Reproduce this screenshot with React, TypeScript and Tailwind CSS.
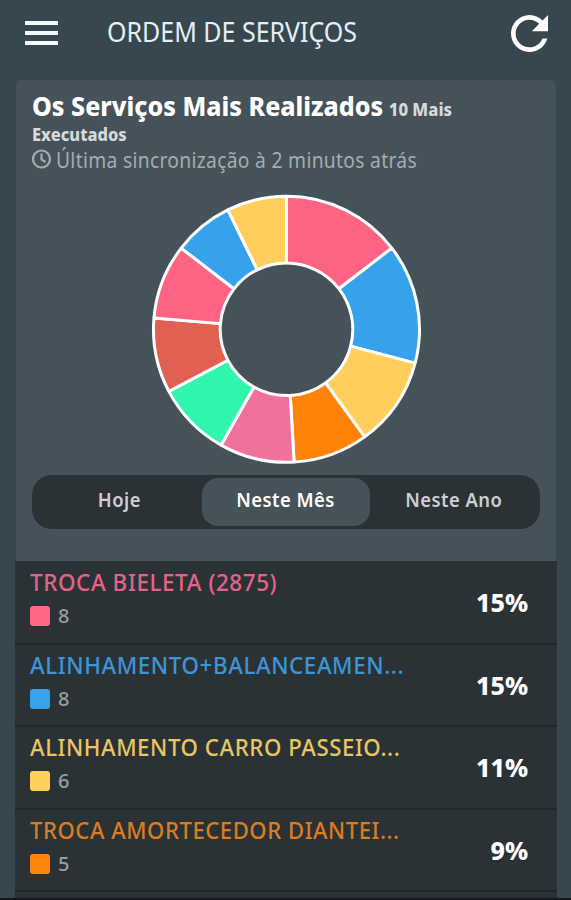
const services = [
  { name: "TROCA BIELETA (2875)", count: 8, percent: "15%", text: "text-[#e46487]", box: "bg-[#ff6684]", scale: "scale-x-[0.936]" },
  { name: "ALINHAMENTO+BALANCEAMEN...", count: 8, percent: "15%", text: "text-[#3e94d5]", box: "bg-[#38a2eb]", scale: "scale-x-[0.933]" },
  { name: "ALINHAMENTO CARRO PASSEIO...", count: 6, percent: "11%", text: "text-[#e8c663]", box: "bg-[#ffce5d]", scale: "scale-x-[0.927]" },
  { name: "TROCA AMORTECEDOR DIANTEI...", count: 5, percent: "9%", text: "text-[#db7c22]", box: "bg-[#ff850e]", scale: "scale-x-[0.92]" },
];

const slices = [
  { value: 8, color: "#ff6384" },
  { value: 8, color: "#36a2eb" },
  { value: 6, color: "#ffce5c" },
  { value: 5, color: "#ff8308" },
  { value: 5, color: "#f0729c" },
  { value: 5, color: "#2ff5ad" },
  { value: 5, color: "#e06052" },
  { value: 5, color: "#ff6384" },
  { value: 4, color: "#36a2eb" },
  { value: 4, color: "#ffce5c" },
];

const periods = [
  { label: "Hoje", active: false, shift: "pl-[6px]" },
  { label: "Neste Mês", active: true, shift: "" },
  { label: "Neste Ano", active: false, shift: "pr-[5px]" },
];

const total = slices.reduce((sum, slice) => sum + slice.value, 0);

const point = (value: number, radius: number) => {
  const angle = (value / total) * Math.PI * 2;
  return `${(Math.sin(angle) * radius).toFixed(2)} ${(-Math.cos(angle) * radius).toFixed(2)}`;
};

function DonutChart() {
  let start = 0;

  return (
    <svg viewBox="-136.5 -136.3 272 272" className="h-[272px] w-[272px]">
      {slices.map((slice, index) => {
        const end = start + slice.value;
        const d = `M${point(start, 133)}A133 133 0 0 1 ${point(end, 133)}L${point(end, 66.3)}A66.3 66.3 0 0 0 ${point(start, 66.3)}Z`;
        start = end;
        return (
          <path key={index} d={d} fill={slice.color} stroke="#fff" strokeWidth="3" strokeLinejoin="bevel" />
        );
      })}
    </svg>
  );
}

export default function App() {
  return (
    <main className="flex h-[900px] w-[571px] flex-col overflow-hidden border-b-2 border-[#171820] bg-[#37474f] font-['Noto_Sans','Open_Sans',sans-serif]">
      <header className="flex h-20 shrink-0 items-start justify-between pr-[23px] pl-[25px]">
        <div className="flex items-start">
          <button type="button" aria-label="Menu" className="mt-[21px] flex w-[33px] flex-col gap-[6px]">
            <span className="h-1 bg-[#f4f9fb]" />
            <span className="h-1 bg-[#f4f9fb]" />
            <span className="h-1 bg-[#f4f9fb]" />
          </button>
          <h1 className="mt-[14px] ml-[49px] origin-left scale-x-[0.925] text-[27px] leading-9 font-normal whitespace-nowrap text-[#e6eff2]">
            ORDEM DE SERVIÇOS
          </h1>
        </div>
        <button type="button" aria-label="Atualizar" className="mt-[15px]">
          <svg viewBox="80 80 352 352" className="h-[37px] w-[37px]" fill="#fff">
            <path d="M256 388c-72.597 0-132-59.405-132-132 0-72.601 59.403-132 132-132 36.3 0 69.299 15.4 92.406 39.601L278 234h154V80l-51.698 51.702C348.406 99.798 304.406 80 256 80c-96.797 0-176 79.203-176 176s78.094 176 176 176c81.045 0 148.287-54.134 169.401-128H378.85c-18.745 49.561-67.138 84-122.85 84z" />
          </svg>
        </button>
      </header>

      <section className="mx-4 flex h-[481px] w-[540px] shrink-0 flex-col rounded-t-md bg-[#465259] px-4">
        <h2 className="mt-2 flex h-9 origin-left scale-x-[0.926] items-baseline leading-9 whitespace-nowrap">
          <span className="text-[27px] font-extrabold text-white">Os Serviços Mais Realizados</span>
          <span className="ml-[6px] text-[18px] font-extrabold text-[#d5dadd]">10 Mais</span>
        </h2>
        <p className="h-5 origin-left scale-x-[0.913] text-[18px] leading-5 font-extrabold text-[#d5dadd]">Executados</p>
        <div className="flex h-8 items-center gap-1 text-[#a4acb1]">
          <svg viewBox="0 0 20 20" className="mb-[2px] h-5 w-5 shrink-0" fill="none" stroke="currentColor" strokeWidth="2.2">
            <circle cx="9.5" cy="10" r="8.5" />
            <path d="M9.5 4.5V10.5L13.5 13" />
          </svg>
          <span className="origin-left scale-x-[0.915] text-[21px] leading-8 tracking-[0.35px] whitespace-nowrap">
            Última sincronização à 2 minutos atrás
          </span>
        </div>

        <div className="mt-[17px] ml-[118px]">
          <DonutChart />
        </div>

        <nav className="mt-[10px] grid h-[54px] w-[508px] grid-cols-[168px_172px_168px] rounded-[20px] bg-[#2b3235] py-[3px]">
          {periods.map((period) => (
            <button
              key={period.label}
              type="button"
              className={[
                "mx-[2px] rounded-2xl pb-[5px] text-[20px] font-semibold tracking-[0.5px] whitespace-nowrap",
                period.shift,
                period.active ? "bg-[#465259] text-white" : "text-[#cbd0d2]",
              ].join(" ")}
            >
              <span className="inline-block scale-x-[0.92]">{period.label}</span>
            </button>
          ))}
        </nav>
      </section>

      <ul className="mx-[15px] w-[542px] grow bg-[#2b3235] pt-px">
        {services.map((service) => (
          <li
            key={service.name}
            className="flex h-[82.5px] items-center justify-between border-b-2 border-[#21272a] pr-[29px] pl-[15px]"
          >
            <div className="h-full">
              <p className={["mt-1 origin-left text-[24px] leading-8 font-medium tracking-[0.6px] whitespace-nowrap", service.text, service.scale].join(" ")}>
                {service.name}
              </p>
              <div className="mt-[5px] flex items-center gap-2">
                <span className={["h-5 w-5 rounded-[3px]", service.box].join(" ")} />
                <span className="text-[20px] leading-[26px] font-medium text-[#989da2]">{service.count}</span>
              </div>
            </div>
            <span className="mt-px text-[25px] font-extrabold text-white">{service.percent}</span>
          </li>
        ))}
      </ul>
    </main>
  );
}
